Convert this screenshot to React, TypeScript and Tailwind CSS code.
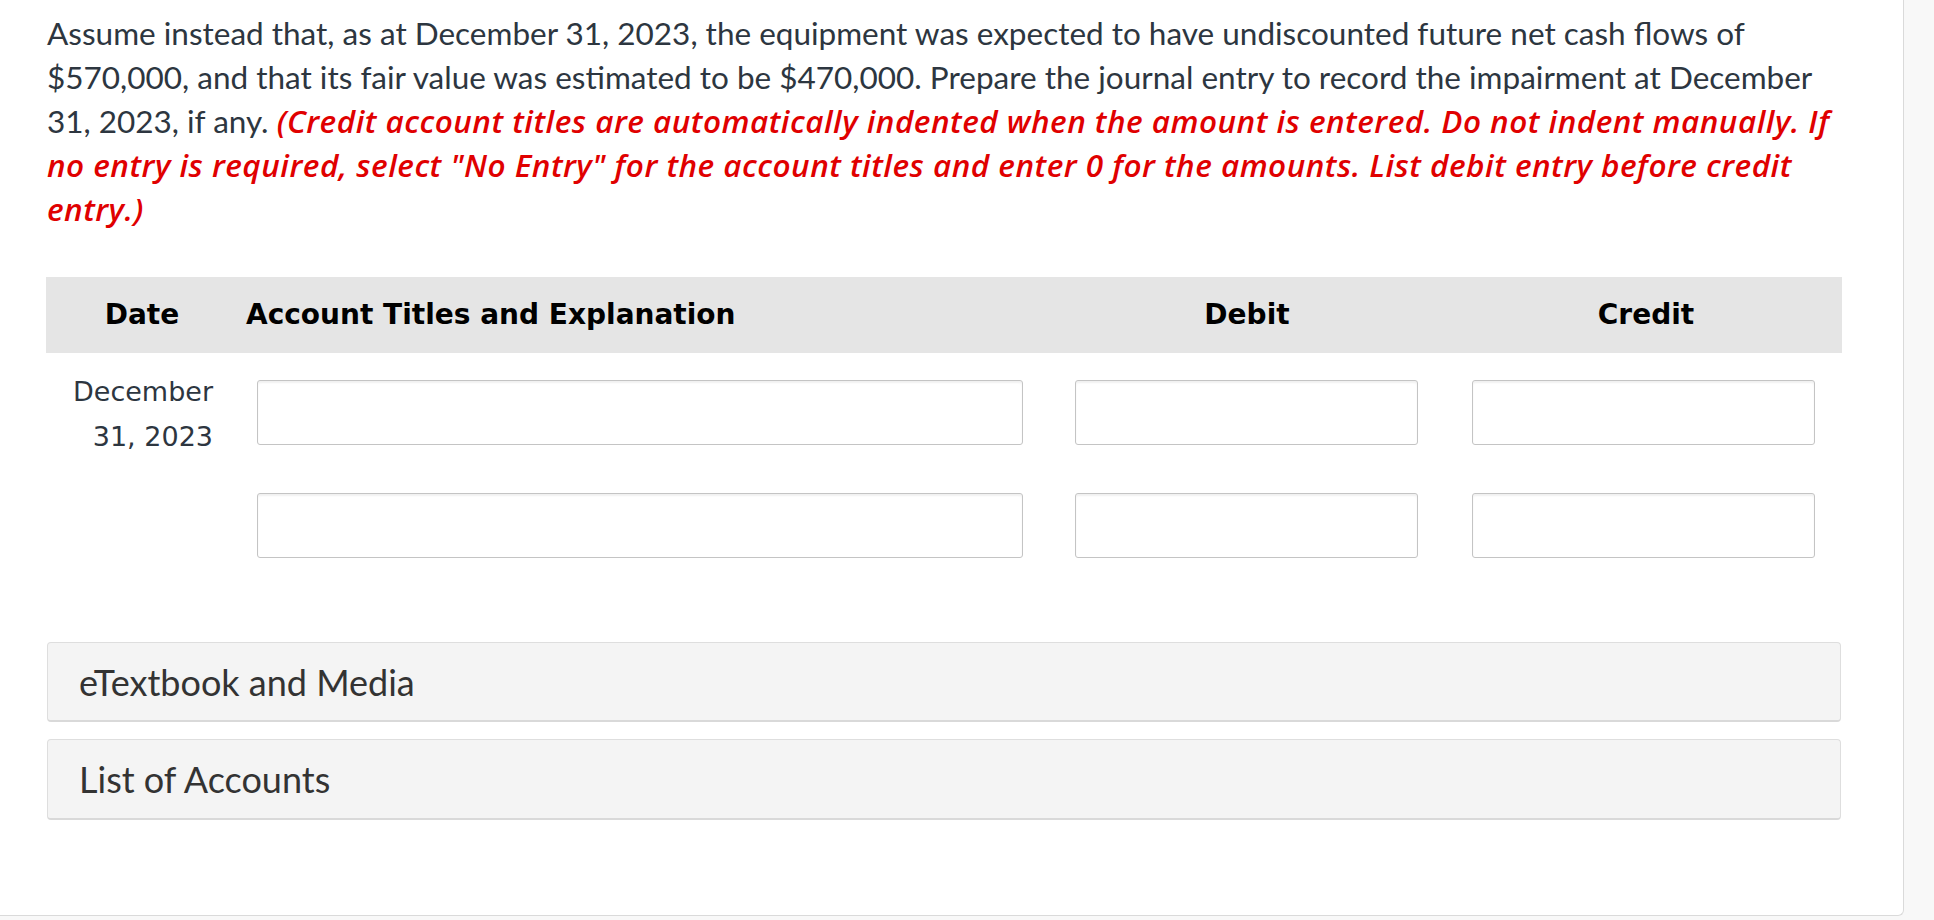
import React from 'react';

const rows = [
  { date: ['December', '31, 2023'] },
  { date: [] as string[] },
];

function Field({ className = '' }: { className?: string }) {
  return (
    <input
      type="text"
      className={`h-[65px] bg-white border border-[#c4c4c4] rounded-[3px] shadow-[inset_0_2px_2px_rgba(0,0,0,0.06)] outline-none ${className}`}
    />
  );
}

export default function App() {
  return (
    <div className="w-[1934px] h-[920px] bg-[#f8f8f8] overflow-hidden">
      <div className="w-[1904px] h-[916px] bg-white border-r border-b border-[#dadada] rounded-br-[6px] pl-[46px] pt-[11px]">
        {/* Question text */}
        <p className="w-[1800px] pl-px font-['Lato',sans-serif] text-[31.5px] leading-[44px] text-[#2d3640]">
          Assume instead that, as at December 31, 2023, the equipment was expected to have undiscounted future net cash flows of
          <br />
          $570,000, and that its fair value was estimated to be $470,000. Prepare the journal entry to record the impairment at December
          <br />
          31, 2023, if any.{' '}
          <span className="font-['Open_Sans',sans-serif] font-semibold italic tracking-[0.47px] text-[#e00000]">
            (Credit account titles are automatically indented when the amount is entered. Do not indent manually. If
            <br />
            no entry is required, select "No Entry" for the account titles and enter 0 for the amounts. List debit entry before credit
            <br />
            entry.)
          </span>
        </p>

        {/* Journal table */}
        <div className="mt-[46px] w-[1796px]">
          <div className="grid grid-cols-[190px_808px_406px_392px] h-[76px] bg-[#e5e5e5] font-['DejaVu_Sans',sans-serif] font-bold text-[28px] text-black">
            <div className="flex items-center justify-center pl-[2px]">Date</div>
            <div className="flex items-center pl-[10px]">Account Titles and Explanation</div>
            <div className="flex items-center justify-center">Debit</div>
            <div className="flex items-center justify-center">Credit</div>
          </div>

          <div className="pt-[20px] flex flex-col gap-[41px]">
            {rows.map((row, i) => (
              <div key={i} className="grid grid-cols-[190px_808px_406px_392px] h-[72px]">
                <div className="-mt-[4px] text-right pr-[23px] font-['DejaVu_Sans',sans-serif] text-[27px] leading-[45px] text-[#2d3640]">
                  {row.date.map((line) => (
                    <div key={line}>{line}</div>
                  ))}
                </div>
                <div className="pt-[7px] pl-[21px]">
                  <Field className="w-[766px]" />
                </div>
                <div className="pt-[7px] pl-[31px]">
                  <Field className="w-[343px]" />
                </div>
                <div className="pt-[7px] pl-[22px]">
                  <Field className="w-[343px]" />
                </div>
              </div>
            ))}
          </div>
        </div>

        {/* Resource panels */}
        <div className="mt-[84px] w-[1795px] pl-px flex flex-col gap-[17px] font-['Lato',sans-serif] text-[36px] text-[#333333]">
          <div className="h-[80px] flex items-center px-[31px] bg-[#f4f4f4] border border-[#dedede] border-b-2 border-b-[#d9d9d9] rounded-[4px]">
            eTextbook and Media
          </div>
          <div className="h-[81px] flex items-center px-[31px] bg-[#f4f4f4] border border-[#dedede] border-b-2 border-b-[#d9d9d9] rounded-[4px]">
            List of Accounts
          </div>
        </div>
      </div>
    </div>
  );
}
